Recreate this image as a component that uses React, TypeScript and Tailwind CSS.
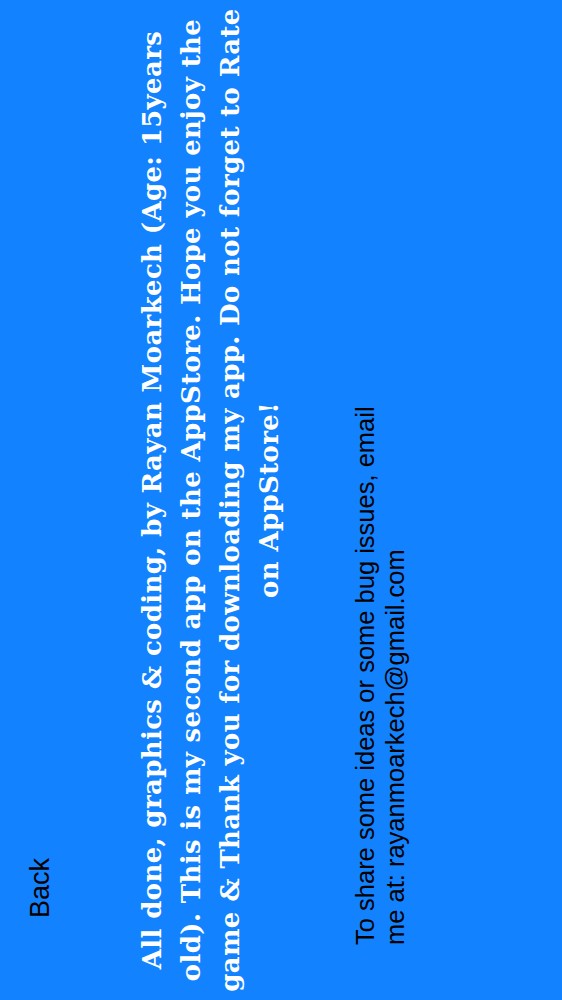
export default function App() {
  return (
    <div className="relative w-[562px] h-[1000px] overflow-hidden bg-[#1282fe]">
      {/* the app runs in landscape; the page is the landscape screen turned a quarter left */}
      <div className="absolute left-0 top-0 w-[1000px] h-[562px] origin-top-left translate-y-[1000px] -rotate-90 flex flex-col">
        <div className="pl-[82px] pt-[24px] text-[27px] leading-[32px] text-black font-['Liberation_Sans',Arial,sans-serif]">
          Back
        </div>
        <p className="mt-[77px] text-center text-white font-bold text-[26px] leading-[39px] tracking-[0.35px] whitespace-nowrap font-['DejaVu_Serif',serif]">
          All done, graphics &amp; coding, by Rayan Moarkech (Age: 15years
          <br />
          old). This is my second app on the AppStore. Hope you enjoy the
          <br />
          game &amp; Thank you for downloading my app. Do not forget to Rate
          <br />
          on AppStore!
        </p>
        <p className="mt-[61px] pl-[55px] text-[25.5px] leading-[30px] text-black whitespace-nowrap font-['Liberation_Sans',Arial,sans-serif]">
          To share some ideas or some bug issues, email
          <br />
          me at: rayanmoarkech@gmail.com
        </p>
      </div>
    </div>
  )
}
